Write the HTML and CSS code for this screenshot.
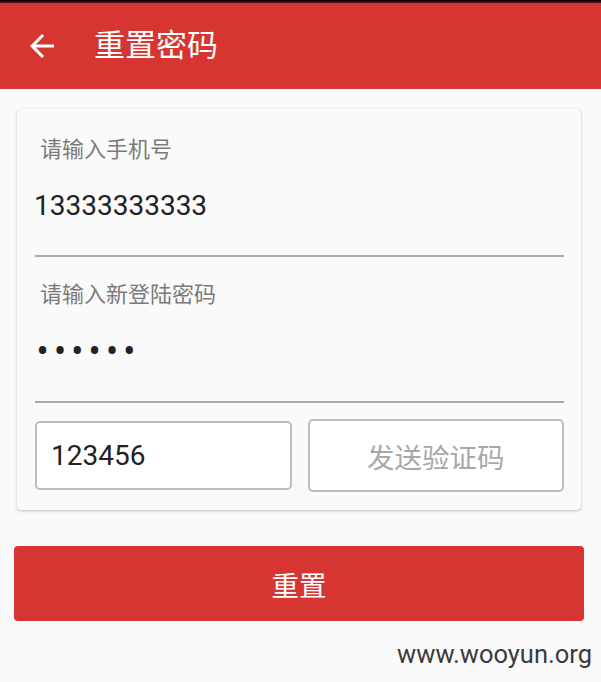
FILE: index.html
```html
<!DOCTYPE html>
<html lang="zh-CN">
<head>
<meta charset="utf-8">
<title>重置密码</title>
<link rel="stylesheet" href="styles.css">
</head>
<body>
<div class="status"></div>
<header class="appbar">
  <svg class="back" viewBox="0 0 24 24" width="36" height="36" aria-hidden="true">
    <path d="M20 11H7.83l5.59-5.59L12 4l-8 8 8 8 1.41-1.41L7.83 13H20v-2z" fill="#fff"/>
  </svg>
  <h1 class="title">重置密码</h1>
</header>
<main class="content">
  <section class="card">
    <div class="field">
      <div class="label">请输入手机号</div>
      <div class="value">13333333333</div>
      <div class="rule"></div>
    </div>
    <div class="field second">
      <div class="label">请输入新登陆密码</div>
      <div class="value dots"><span>•</span><span>•</span><span>•</span><span>•</span><span>•</span><span>•</span></div>
      <div class="rule rule-two"></div>
    </div>
    <div class="code-row">
      <div class="code-input">123456</div>
      <div class="send-btn">发送验证码</div>
    </div>
  </section>
  <div class="reset-btn">重置</div>
  <div class="watermark">www.wooyun.org</div>
</main>
</body>
</html>
```

FILE: styles.css
```css
html, body {
  margin: 0;
  padding: 0;
  background: #fafafa;
  font-family: Roboto, "Noto Sans CJK SC", sans-serif;
}

.status {
  height: 3px;
  background: linear-gradient(#000, #5a1614);
}

.appbar {
  height: 86px;
  background: #d63532;
  display: flex;
  align-items: center;
  padding-left: 24px;
}

.back {
  display: block;
  flex: none;
}

.title {
  margin: 0 0 0 34px;
  color: #fff;
  font-size: 31px;
  font-weight: normal;
  line-height: 40px;
}

.content {
  padding-top: 20px;
}

.card {
  margin: 0 20px 0 17px;
  background: #fafafa;
  border-radius: 4px;
  box-shadow: 0 1px 3px rgba(0, 0, 0, 0.22), 0 0 1px rgba(0, 0, 0, 0.12);
  padding: 27px 17px 18px 18px;
}

.label {
  padding-left: 5px;
  font-size: 22px;
  line-height: 28px;
  color: #7a7a7a;
}

.value {
  margin-top: 22px;
  font-size: 28px;
  line-height: 40px;
  color: #222;
  margin-left: -1px;
}

.rule {
  margin-top: 29px;
  height: 2px;
  background: #ababab;
}

.second {
  margin-top: 24px;
}

.dots {
  display: flex;
  margin-top: 23px;
  margin-left: -1px;
}

.dots span {
  width: 17.33px;
  text-align: center;
  font-size: 36px;
  line-height: 40px;
}

.rule-two {
  margin-top: 29px;
}

.code-row {
  margin-top: 16px;
  display: grid;
  grid-template-columns: 1fr 1fr;
  gap: 16px;
  align-items: center;
}

.code-input {
  min-width: 0;
  box-sizing: border-box;
  height: 69px;
  border: 2px solid #bdbdbd;
  border-radius: 5px;
  background: #fff;
  padding-left: 14px;
  display: flex;
  align-items: center;
  font-size: 28px;
  color: #222;
}

.send-btn {
  min-width: 0;
  box-sizing: border-box;
  height: 73px;
  border: 2px solid #bdbdbd;
  border-radius: 5px;
  background: #fff;
  display: flex;
  align-items: center;
  justify-content: center;
  font-size: 27.5px;
  color: #a8a8a8;
}

.reset-btn {
  margin: 36px 17px 0 14px;
  height: 75px;
  border-radius: 4px;
  background: #d63532;
  color: #fff;
  font-size: 27.5px;
  display: flex;
  align-items: center;
  justify-content: center;
}

.watermark {
  margin-top: 18px;
  padding-right: 9px;
  text-align: right;
  font-size: 25.5px;
  line-height: 30px;
  color: #3b3b3b;
}
```
